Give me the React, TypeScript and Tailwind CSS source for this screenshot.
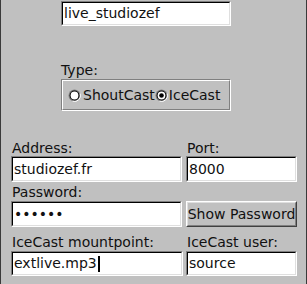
import React from "react";

// Tk-style sunken entry: 2px bevel, white field
function Entry({
  value,
  className,
  cursor = false,
}: Readonly<{ value: string; className?: string; cursor?: boolean }>) {
  return (
    <div
      className={`border border-t-[#808080] border-l-[#808080] border-b-white border-r-white ${className ?? ""}`}
    >
      <div className="flex h-full items-center border border-t-black border-l-black border-b-[#dfdfdf] border-r-[#dfdfdf] bg-white pl-[1px] leading-[17px] whitespace-nowrap overflow-hidden">
        <span>{value}</span>
        {cursor && <span className="ml-[1px] inline-block h-[16px] w-[2px] bg-black" />}
      </div>
    </div>
  );
}

function Radio({ checked }: Readonly<{ checked?: boolean }>) {
  return (
    <svg viewBox="0 0 13 13" className="size-[13px] shrink-0" aria-hidden>
      <circle cx="6.5" cy="6.5" r="6" fill="#808080" />
      <path d="M12.2 4.6A6 6 0 0 1 4.6 12.2" stroke="#ffffff" strokeWidth="1" fill="none" />
      <circle cx="6.5" cy="6.5" r="4.9" fill="#000" />
      <circle cx="6.5" cy="6.5" r="3.9" fill="#fff" />
      {checked && <circle cx="6.5" cy="6.5" r="2.3" fill="#000" />}
    </svg>
  );
}

function Label({ text, className }: Readonly<{ text: string; className?: string }>) {
  return <div className={`h-4 leading-4 whitespace-nowrap ${className ?? ""}`}>{text}</div>;
}

export default function App() {
  return (
    <div
      className="flex h-[284px] w-[307px] flex-col overflow-hidden border-x border-x-[#3a3a3a] bg-[#c0c0c0] text-[14px] text-[#111]"
      style={{ fontFamily: '"DejaVu Sans", sans-serif' }}
    >
      {/* Stream name */}
      <Entry value="live_studiozef" className="ml-[60px] mt-[1px] h-[25px] w-[170px]" />

      {/* Type */}
      <div className="ml-[60px] mt-[36px] h-[17px] leading-[17px]">Type:</div>
      <div className="ml-[60px] h-[32px] w-[170px] border border-t-[#808080] border-l-[#808080] border-b-white border-r-white">
        <div className="flex h-full items-center border border-t-white border-l-white border-b-[#808080] border-r-[#808080] pl-[5px]">
          <Radio />
          <span className="ml-[2px] leading-[17px]">ShoutCast</span>
          <Radio checked />
          <span className="ml-[1px] leading-[17px]">IceCast</span>
        </div>
      </div>

      {/* Connection grid */}
      <div className="ml-[10px] mt-[29px] grid grid-cols-[171px_111px] gap-x-[4px]">
        <Label text="Address:" className="pl-[1px]" />
        <Label text="Port:" className="pl-[1px]" />
        <Entry value="studiozef.fr" className="h-[26px]" />
        <Entry value="8000" className="h-[26px]" />

        <Label text="Password:" className="mt-[2px] pl-[1px]" />
        <div />
        <Entry value="••••••" className="mt-[1px] h-[26px]" />
        <div className="mt-[1px] h-[26px] border border-t-white border-l-white border-b-[#404040] border-r-[#404040]">
          <div className="flex h-full items-center justify-center border border-t-[#dfdfdf] border-l-[#dfdfdf] border-b-[#808080] border-r-[#808080] whitespace-nowrap leading-[17px]">
            Show Password
          </div>
        </div>

        <Label text="IceCast mountpoint:" className="mt-[7px] pl-[1px]" />
        <Label text="IceCast user:" className="mt-[7px] pl-[1px]" />
        <Entry value="extlive.mp3" cursor className="mt-[1px] h-[25px] w-[172px]" />
        <Entry value="source" className="mt-[1px] h-[25px]" />
      </div>
    </div>
  );
}
